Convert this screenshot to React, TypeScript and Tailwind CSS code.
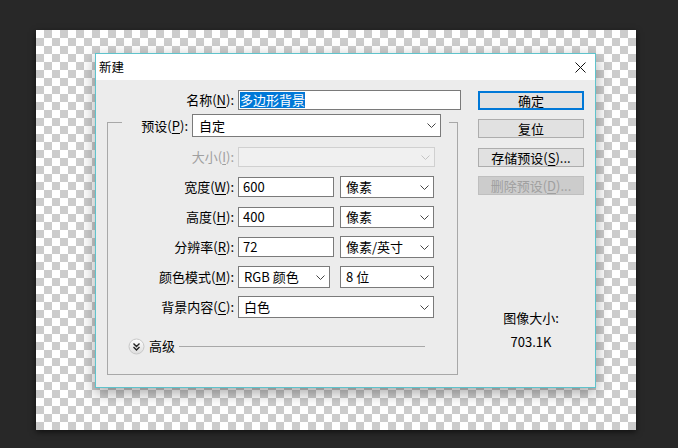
import React from "react";

const Chevron = ({ color = "#444" }: { color?: string }) => (
  <svg width="9" height="5" viewBox="0 0 9 5" className="ml-auto mr-[4px] shrink-0">
    <path d="M0.5 0.5 L4.5 4.5 L8.5 0.5" stroke={color} strokeWidth="1" fill="none" />
  </svg>
);

const U = ({ c }: { c: string }) => <span className="underline underline-offset-2">{c}</span>;

const Select = ({ w, text, h = "h-[22px]" }: { w: string; text: string; h?: string }) => (
  <div className={`${w} ${h} border border-[#7a7a7a] bg-white flex items-center pl-[5px] shrink-0`}>
    <span className="leading-[16px]">{text}</span>
    <Chevron />
  </div>
);

const Input = ({ text }: { text: string }) => (
  <div className="w-[96px] h-[20px] border border-[#7a7a7a] bg-white flex items-center pl-[4px] shrink-0">
    <span className="leading-[16px]">{text}</span>
  </div>
);

const Label = ({ children, disabled }: { children: React.ReactNode; disabled?: boolean }) => (
  <div className={`w-[130px] pr-[4px] text-right shrink-0 leading-[16px] ${disabled ? "text-[#a0a0a0]" : "text-black"}`}>
    {children}
  </div>
);

const Button = ({ children, primary, disabled, className = "" }: { children: React.ReactNode; primary?: boolean; disabled?: boolean; className?: string }) => (
  <div
    className={`w-[106px] h-[19px] flex items-center justify-center leading-[16px] ${
      primary
        ? "border-2 border-[#0078d7] bg-[#e1e1e1] text-black"
        : disabled
        ? "border border-[#bfbfbf] bg-[#cccccc] text-[#a0a0a0]"
        : "border border-[#adadad] bg-[#e1e1e1] text-black"
    } ${className}`}
  >
    {children}
  </div>
);

export default function App() {
  return (
    <div
      className="w-[678px] h-[448px] bg-[#282828] pt-[30px] pl-[36px] overflow-hidden text-[13px] text-black"
      style={{ fontFamily: '"Noto Sans CJK SC", "Noto Sans", sans-serif' }}
    >
      <div className="relative w-[600px] h-[400px] bg-[conic-gradient(#cccccc_25%,#ffffff_0_50%,#cccccc_0_75%,#ffffff_0)] bg-[length:16px_16px] shadow-[0_2px_6px_rgba(0,0,0,0.6)]">
        <div className="absolute left-[59px] top-[23px] w-[501px] h-[335px] border border-[#5fc3cc] bg-[#ececec] flex flex-col shadow-[0_5px_14px_rgba(0,0,0,0.35)]">
          {/* title bar */}
          <div className="h-[26px] bg-white flex items-center pl-[3px] shrink-0">
            <span className="text-[12.5px] leading-[16px]">新建</span>
            <svg width="11" height="11" viewBox="0 0 11 11" className="ml-auto mr-[9px]">
              <path d="M0.5 0.5 L10.5 10.5 M10.5 0.5 L0.5 10.5" stroke="#111" strokeWidth="1" />
            </svg>
          </div>
          {/* body */}
          <div className="flex-1 flex flex-row">
            <div className="w-[370px] flex flex-col">
              <div className="mt-[10px] h-[20px] flex items-center">
                <div className="w-[142px] pr-[4px] text-right leading-[16px]">
                  名称(<U c="N" />):
                </div>
                <div className="w-[223px] h-[20px] border border-[#7a7a7a] bg-white flex items-center pl-[1px]">
                  <span className="bg-[#0078d7] text-white leading-[16px]">多边形背景</span>
                </div>
              </div>
              {/* group box */}
              <div className="relative mt-[12px] ml-[11px] w-[351px] h-[253px] border border-[#a8a8a8] pt-[23px] flex flex-col">
                <div className="absolute left-[14px] -top-[9px] w-[327px] h-[23px] bg-[#ececec] flex items-center justify-end pr-[8px] gap-[4px]">
                  <span className="leading-[16px]">
                    预设(<U c="P" />):
                  </span>
                  <div className="w-[249px] h-[23px] border border-[#7a7a7a] bg-white flex items-center pl-[6px]">
                    <span className="leading-[16px]">自定</span>
                    <Chevron />
                  </div>
                </div>

                <div className="h-[22px] flex items-center">
                  <Label disabled>
                    大小(<U c="I" />):
                  </Label>
                  <div className="w-[197px] h-[20px] border border-[#d0d0d0] bg-[#f0f0f0] flex items-center">
                    <Chevron color="#c4c4c4" />
                  </div>
                </div>

                <div className="mt-[8px] h-[22px] flex items-center">
                  <Label>
                    宽度(<U c="W" />):
                  </Label>
                  <Input text="600" />
                  <div className="ml-[6px]">
                    <Select w="w-[94px]" text="像素" />
                  </div>
                </div>

                <div className="mt-[8px] h-[22px] flex items-center">
                  <Label>
                    高度(<U c="H" />):
                  </Label>
                  <Input text="400" />
                  <div className="ml-[6px]">
                    <Select w="w-[94px]" text="像素" />
                  </div>
                </div>

                <div className="mt-[8px] h-[22px] flex items-center">
                  <Label>
                    分辨率(<U c="R" />):
                  </Label>
                  <Input text="72" />
                  <div className="ml-[6px]">
                    <Select w="w-[94px]" text="像素/英寸" />
                  </div>
                </div>

                <div className="mt-[8px] h-[22px] flex items-center">
                  <Label>
                    颜色模式(<U c="M" />):
                  </Label>
                  <Select w="w-[92px]" text="RGB 颜色" />
                  <div className="ml-[10px]">
                    <Select w="w-[94px]" text="8 位" />
                  </div>
                </div>

                <div className="mt-[8px] h-[22px] flex items-center">
                  <Label>
                    背景内容(<U c="C" />):
                  </Label>
                  <Select w="w-[196px]" text="白色" />
                </div>

                <div className="mt-[19px] h-[18px] flex items-center pl-[20px]">
                  <svg width="17" height="17" viewBox="0 0 17 17" className="shrink-0">
                    <defs>
                      <linearGradient id="adv" x1="0" y1="0" x2="0" y2="1">
                        <stop offset="0" stopColor="#ffffff" />
                        <stop offset="1" stopColor="#dcdcdc" />
                      </linearGradient>
                    </defs>
                    <circle cx="8.5" cy="8.5" r="7.5" fill="url(#adv)" stroke="#c8c8c8" strokeWidth="1" />
                    <path d="M5.5 5.5 L8.5 8.5 L11.5 5.5 M5.5 9 L8.5 12 L11.5 9" stroke="#222" strokeWidth="1.4" fill="none" />
                  </svg>
                  <span className="ml-[4px] leading-[16px]">高级</span>
                  <div className="ml-[4px] mr-[32px] flex-1 h-px bg-[#a8a8a8]" />
                </div>
              </div>
            </div>
            {/* right column */}
            <div className="ml-[12px] w-[106px] pt-[11px] flex flex-col">
              <Button primary>确定</Button>
              <Button className="mt-[9px]">复位</Button>
              <Button className="mt-[10px]">
                存储预设(<U c="S" />)...
              </Button>
              <Button disabled className="mt-[9px]">
                删除预设(<U c="D" />)...
              </Button>
              <div className="mt-[115px] text-center leading-[16px]">图像大小:</div>
              <div className="mt-[8px] text-center leading-[16px]">703.1K</div>
            </div>
          </div>
        </div>
      </div>
    </div>
  );
}
